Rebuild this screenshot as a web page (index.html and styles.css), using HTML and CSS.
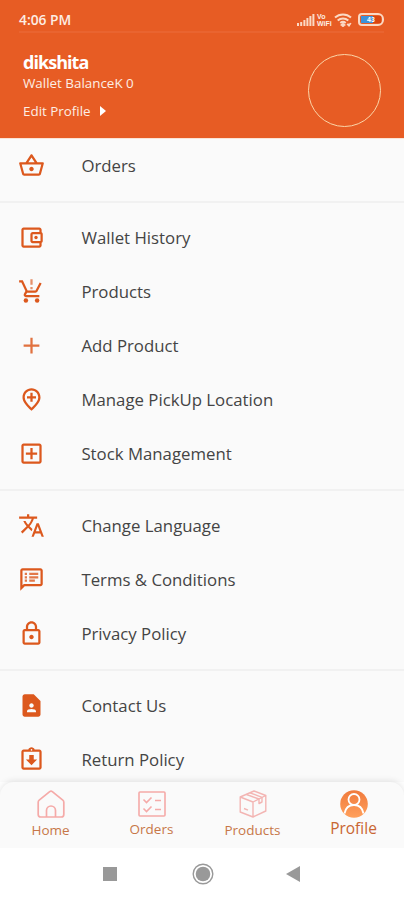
FILE: index.html
```html
<!DOCTYPE html>
<html lang="en">
<head>
    <meta charset="UTF-8">
    <meta name="viewport" content="width=device-width, initial-scale=1.0">
    <title>Profile</title>
    <link rel="stylesheet" href="styles.css">
</head>
<body>
    <div class="screen">
        <header class="header">
            <div class="status-bar">
                <span class="time">4:06 PM</span>
                <div class="status-icons">
                    <svg width="18" height="12" viewBox="0 0 18 12" fill="#fbd9c4">
                        <path d="M0 9h2v3H0zM3.2 8h2v4h-2zM6.4 6h2v6h-2zM9.4 4h2v8h-2zM12.4 2h2v10h-2zM15.4 0h2v12h-2z"/>
                    </svg>
                    <span class="vowifi"><span>Vo</span><span>WiFi</span></span>
                    <svg class="wifi" width="18" height="14" viewBox="0 0 18 14" fill="none" stroke="#fbd9c4" stroke-width="2">
                        <path d="M1 4.6C5.500.5 12.500.5 17 4.600M3.700 7.400c3-2.700 7.600-2.700 10.600 0M6.300 10c1.600-1.300 3.800-1.300 5.400 0"/>
                        <path d="M9 10.500l2 1.500-2 1.500-2-1.500zM13 11l2 2 2-3" stroke-width="1.200" fill="#fbd9c4"/>
                    </svg>
                    <div class="battery"><span class="level">43</span></div>
                </div>
            </div>
            <div class="profile">
                <div class="info">
                    <h1>dikshita</h1>
                    <p class="balance">Wallet BalanceK 0</p>
                    <a class="edit">Edit Profile
                        <svg width="6" height="10" viewBox="0 0 6 10" fill="#fff"><path d="M0 0l6 5-6 5z"/></svg>
                    </a>
                </div>
                <div class="avatar"></div>
            </div>
        </header>

        <main class="menu">
            <div class="item">
                <svg class="icon" viewBox="0 0 24 24"><path d="M22 9h-4.790l-4.380-6.560c-.19-.28-.51-.42-.83-.42s-.64.14-.83.43L6.790 9H2c-.55 0-1 .45-1 1 0 .09.01.18.04.27l2.540 9.270c.23.84 1 1.460 1.920 1.460h13c.92 0 1.690-.62 1.930-1.460l2.540-9.270L23 10c0-.55-.45-1-1-1zM12 4.800L14.800 9H9.200L12 4.800zM18.500 19l-12.990.01L3.310 11H20.700l-2.200 8zM12 13c-1.100 0-2 .9-2 2s.9 2 2 2 2-.9 2-2-.9-2-2-2z"/></svg>
                <span>Orders</span>
            </div>
            <hr>
            <div class="item">
                <svg class="icon" viewBox="0 0 24 24"><path d="M21 7.280V5c0-1.100-.9-2-2-2H5c-1.110 0-2 .9-2 2v14c0 1.100.89 2 2 2h14c1.100 0 2-.9 2-2v-2.280c.59-.35 1-.98 1-1.720V9c0-.74-.41-1.370-1-1.720zM20 9v6h-7V9h7zM5 19V5h14v2h-6c-1.100 0-2 .9-2 2v6c0 1.100.9 2 2 2h6v2H5z"/><circle cx="16" cy="12" r="1.500"/></svg>
                <span>Wallet History</span>
            </div>
            <div class="item">
                <svg class="icon" viewBox="0 0 24 24"><path d="M8.100 13h7.450c.75 0 1.410-.41 1.750-1.030L21 4.960 19.250 4l-3.700 7H8.530L4.270 2H1v2h2l3.600 7.590-1.350 2.440C4.520 15.370 5.480 17 7 17h12v-2H7l1.100-2z"/><path d="M11 1h2v5h-2zM11 8h2v2h-2z" opacity=".65"/><circle cx="7" cy="20" r="2"/><circle cx="17" cy="20" r="2"/></svg>
                <span>Products</span>
            </div>
            <div class="item">
                <svg class="icon" viewBox="0 0 24 24"><path d="M19 13h-6v6h-2v-6H5v-2h6V5h2v6h6v2z" opacity=".85"/></svg>
                <span>Add Product</span>
            </div>
            <div class="item">
                <svg class="icon" viewBox="0 0 24 24"><path d="M13 6v3h3v2h-3v3h-2v-3H8V9h3V6h2zm5 4.200C18 6.570 15.350 4 12 4s-6 2.570-6 6.200c0 2.340 1.950 5.440 6 9.140 4.050-3.700 6-6.800 6-9.140zM12 2c4.200 0 8 3.220 8 8.200 0 3.320-2.670 7.250-8 11.800-5.330-4.550-8-8.480-8-11.800C4 5.220 7.800 2 12 2z"/></svg>
                <span>Manage PickUp Location</span>
            </div>
            <div class="item">
                <svg class="icon" viewBox="0 0 24 24"><path d="M19 3H5c-1.110 0-2 .9-2 2v14c0 1.100.89 2 2 2h14c1.100 0 2-.9 2-2V5c0-1.100-.9-2-2-2zm0 16H5V5h14v14zm-8-2h2v-4h4v-2h-4V7h-2v4H7v2h4z"/></svg>
                <span>Stock Management</span>
            </div>
            <hr>
            <div class="item">
                <svg class="icon" viewBox="0 0 24 24"><path d="M12.870 15.070l-2.540-2.510.03-.03c1.740-1.940 2.980-4.170 3.710-6.530H17V4h-7V2H8v2H1v1.990h11.170C11.500 7.920 10.440 9.750 9 11.350 8.070 10.320 7.300 9.190 6.690 8h-2c.73 1.630 1.730 3.170 2.980 4.560l-5.090 5.020L4 19l5-5 3.110 3.110.76-2.040zM18.500 10h-2L12 22h2l1.120-3h4.750L21 22h2l-4.500-12zm-2.620 7l1.620-4.330L19.120 17h-3.240z"/></svg>
                <span>Change Language</span>
            </div>
            <div class="item">
                <svg class="icon" viewBox="0 0 24 24"><path d="M20 2H4c-1.100 0-1.990.9-1.990 2L2 22l4-4h14c1.100 0 2-.9 2-2V4c0-1.100-.9-2-2-2zm0 14H5.170L4 17.170V4h16v12z"/><path d="M6 12h2v2H6zM6 9h2v2H6zM6 6h2v2H6zM10 12h5v2h-5zM10 9h8v2h-8zM10 6h8v2h-8z" opacity=".8"/></svg>
                <span>Terms &amp; Conditions</span>
            </div>
            <div class="item">
                <svg class="icon" viewBox="0 0 24 24"><path d="M18 8h-1V6c0-2.760-2.240-5-5-5S7 3.240 7 6v2H6c-1.100 0-2 .9-2 2v10c0 1.100.9 2 2 2h12c1.100 0 2-.9 2-2V10c0-1.100-.9-2-2-2zM9 6c0-1.660 1.340-3 3-3s3 1.340 3 3v2H9V6zm9 14H6V10h12v10zm-6-3c1.100 0 2-.9 2-2s-.9-2-2-2-2 .9-2 2 .9 2 2 2z"/></svg>
                <span>Privacy Policy</span>
            </div>
            <hr>
            <div class="item">
                <svg class="icon" viewBox="0 0 24 24"><path d="M14 2H6c-1.100 0-2 .9-2 2v16c0 1.100.89 2 1.990 2H18c1.100 0 2-.9 2-2V8l-6-6zm-2 8c1.100 0 2 .9 2 2s-.9 2-2 2-2-.9-2-2 .9-2 2-2zm4 8H8v-.57c0-.81.48-1.530 1.220-1.850.85-.37 1.790-.58 2.780-.58s1.930.21 2.780.58c.74.32 1.220 1.040 1.220 1.850V18z"/></svg>
                <span>Contact Us</span>
            </div>
            <div class="item">
                <svg class="icon" viewBox="0 0 24 24"><path d="M19 3h-4.180C14.400 1.840 13.300 1 12 1s-2.400.84-2.820 2H5c-1.100 0-2 .9-2 2v14c0 1.100.9 2 2 2h14c1.100 0 2-.9 2-2V5c0-1.100-.9-2-2-2zm-7-.25c.41 0 .75.34.75.75s-.34.75-.75.75-.75-.34-.75-.75.34-.75.75-.75zM19 19H5V5h14v14z"/><path d="M12 17l5-5h-3V8h-4v4H7z"/></svg>
                <span>Return Policy</span>
            </div>
        </main>

        <nav class="tabs">
            <a class="tab">
                <svg width="28" height="28" viewBox="0 0 28 28" fill="none" stroke="#f5aaa8" stroke-width="1.700" stroke-linejoin="round">
                    <path d="M1.200 12.200Q1.200 11 2.200 10.200L12.700 1.600Q14 .6 15.300 1.600L25.800 10.200Q26.800 11 26.800 12.200V24.500Q26.800 27 24.300 27H3.700Q1.200 27 1.200 24.500Z"/>
                    <path d="M9.500 27v-6.500a4.500 4.500 0 0 1 9 0V27"/>
                </svg>
                <span>Home</span>
            </a>
            <a class="tab orders">
                <svg width="28" height="26" viewBox="0 0 28 26" fill="none" stroke="#f5aaa8" stroke-width="1.600">
                    <rect x="1" y="1" width="26" height="24" rx="1"/>
                    <path d="M5.500 8.500l3 3 5-5M5.500 17.500l3 3 5-5M17 9.500h6M17 18.500h6"/>
                </svg>
                <span>Orders</span>
            </a>
            <a class="tab">
                <svg width="28" height="28" viewBox="0 0 28 28" fill="none" stroke="#f3b5b3" stroke-width="1.400" stroke-linejoin="round">
                    <path d="M1.200 7L15 1l11.800 4.500V21L14 27 1.200 22zM1.200 7L14 12l12.800-6.500M14 12v15"/>
                    <path d="M7.500 4.500L20 9v4.500l3-1.500V7.300L11 2.800M5 18.500l4 1.600"/>
                </svg>
                <span>Products</span>
            </a>
            <a class="tab active">
                <svg width="28" height="28" viewBox="0 0 28 28">
                    <defs>
                        <linearGradient id="userFill" x1="0" y1="0" x2="0" y2="1">
                            <stop offset="0" stop-color="#f07a3c"/>
                            <stop offset="1" stop-color="#ffa05c"/>
                        </linearGradient>
                    </defs>
                    <circle cx="14" cy="14" r="13.800" fill="url(#userFill)"/>
                    <g fill="none" stroke="#fff" stroke-width="1.800">
                        <circle cx="14" cy="9.500" r="5.500"/>
                        <path d="M4.500 23.500c1-5.500 4.500-8.500 9.500-8.500s8.500 3 9.500 8.500"/>
                    </g>
                </svg>
                <span>Profile</span>
            </a>
        </nav>

        <div class="system-nav">
            <svg width="14" height="14" viewBox="0 0 14 14"><rect width="14" height="14" fill="#999"/></svg>
            <svg width="22" height="22" viewBox="0 0 22 22"><circle cx="11" cy="11" r="9.800" fill="none" stroke="#999" stroke-width="1.400"/><circle cx="11" cy="11" r="7.300" fill="#999"/></svg>
            <svg class="back" width="14" height="16" viewBox="0 0 14 16"><path d="M14 0v16L0 8z" fill="#999"/></svg>
        </div>
    </div>
</body>
</html>
```
FILE: styles.css
```css
* {
    box-sizing: border-box;
}
body {
    margin: 0;
    font-family: "Open Sans", "Noto Sans", sans-serif;
    background: #fff;
}
.screen {
    display: flex;
    flex-direction: column;
    width: 404px;
    height: 900px;
    overflow: hidden;
}
.header {
    height: 139px;
    flex: none;
    background: #e75c24;
    color: #fdeee4;
    border-bottom: 1px solid #fbe3d5;
}
.status-bar {
    display: flex;
    justify-content: space-between;
    align-items: center;
    height: 33px;
    margin: 0 20px 0 19px;
    padding-top: 8px;
    border-bottom: 2px solid #e96430;
}
.time {
    font-size: 13.800px;
    font-weight: 600;
}
.status-icons {
    display: flex;
    align-items: center;
    gap: 2px;
}
.vowifi {
    display: flex;
    flex-direction: column;
    width: 15px;
    font: bold 7px/7px "Liberation Sans", sans-serif;
}
.wifi {
    margin: 0 4px 0 0;
}
.battery {
    width: 26px;
    height: 13px;
    padding: 1px;
    border: 2px solid #fbd9c4;
    border-radius: 4px 6px 6px 4px;
}
.level {
    display: block;
    height: 100%;
    background: linear-gradient(90deg, #3d92d8 60%, #d9440f 60%);
    font: bold 7px/7px "Liberation Sans", sans-serif;
    text-align: center;
    color: #fff;
}
.profile {
    display: flex;
    justify-content: space-between;
    padding: 17px 23px 0;
}
.info h1 {
    margin: 0;
    font-size: 18px;
    line-height: 24px;
    font-weight: 700;
    letter-spacing: -0.950px;
    color: #fff;
}
.balance {
    margin: 0;
    font-size: 13.400px;
    line-height: 19px;
}
.edit {
    display: flex;
    align-items: center;
    gap: 9px;
    margin-top: 9px;
    font-size: 13.400px;
    line-height: 18px;
}
.avatar {
    width: 73px;
    height: 73px;
    margin-top: 4px;
    border: 1.500px solid #fbd5a8;
    border-radius: 50%;
}
.menu {
    flex: 1;
    min-height: 0;
    overflow: hidden;
    background: #fafafa;
}
.item {
    display: flex;
    align-items: center;
    gap: 36px;
    height: 54px;
    padding: 0 0 2px 18.400px;
    font-size: 16.800px;
    color: #444;
}
.icon {
    width: 27px;
    height: 27px;
    fill: #dc581d;
}
.menu hr {
    height: 18px;
    margin: 0;
    border: none;
    background: linear-gradient(#f1f1f1, #f1f1f1) center / 100% 2px no-repeat;
}
.tabs {
    display: grid;
    grid-template-columns: repeat(4, 1fr);
    flex: none;
    height: 66px;
    z-index: 1;
    border-radius: 14px 14px 0 0;
    background: #fafafa;
    box-shadow: 0 -1px 6px rgba(0, 0, 0, 0.11);
}
.tab {
    display: flex;
    flex-direction: column;
    align-items: center;
    padding-top: 8px;
    font-size: 13.500px;
    line-height: 20px;
    color: #c77748;
}
.tab span {
    margin-top: 2px;
}
.tab.orders {
    padding-top: 9px;
}
.tab.active {
    font-size: 15.500px;
    color: #c96632;
}
.tab.active span {
    margin-top: 0;
}
.system-nav {
    display: flex;
    align-items: center;
    flex: none;
    height: 52px;
    gap: 75px;
    padding-left: 103px;
    background: #fff;
    z-index: 2;
}
.back {
    margin-left: -3px;
}
```
